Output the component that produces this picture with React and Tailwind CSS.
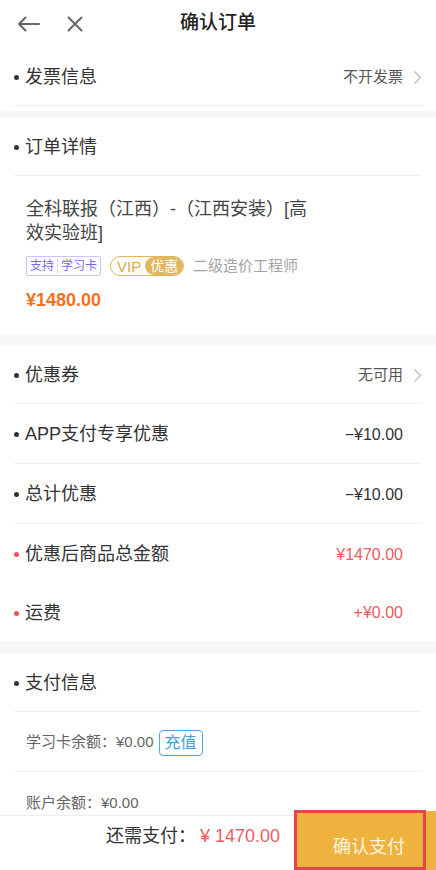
import React from "react";

const Chevron = () => (
  <svg width="9" height="15" viewBox="0 0 9 15" className="ml-[10px] shrink-0">
    <path d="M1.5 1.5 L7.5 7.5 L1.5 13.5" fill="none" stroke="#bdbdbd" strokeWidth="1.4" />
  </svg>
);

const Row = ({ label, value, chevron, red, valueClass, last, h }) => (
  <div
    className={`mx-[14px] pt-[3px] flex items-center ${h || "h-[60px]"} ${last ? "" : "border-b border-[#eeeeee]"}`}
  >
    <span className={`w-[5px] h-[5px] rounded-full shrink-0 ${red ? "bg-[#f0525a]" : "bg-[#333333]"}`} />
    <span className="ml-[6px] text-[18px] text-[#333333]">{label}</span>
    <span className={`ml-auto ${valueClass || "text-[15px] text-[#555555]"}`}>{value}</span>
    {chevron ? <Chevron /> : <span className="w-[19px] shrink-0" />}
  </div>
);

export default function App() {
  return (
    <div className="min-h-[870px] bg-[#f7f7f7] font-['Liberation_Sans','Noto_Sans_CJK_SC',sans-serif] pb-[60px]">
      {/* 头部 + 发票 */}
      <div className="bg-white pb-[5px]">
        <div className="h-[47px] flex items-center">
          <div className="w-[110px] flex items-center pl-[17px] gap-[27px]">
            <svg width="23" height="16" viewBox="0 0 23 16">
              <path d="M22 8 H2 M8.5 1.5 L2 8 L8.5 14.5" fill="none" stroke="#666666" strokeWidth="2" strokeLinecap="round" strokeLinejoin="round" />
            </svg>
            <svg width="16" height="16" viewBox="0 0 16 16">
              <path d="M1.5 1.5 L14.5 14.5 M14.5 1.5 L1.5 14.5" fill="none" stroke="#666666" strokeWidth="2" strokeLinecap="round" />
            </svg>
          </div>
          <div className="flex-1 text-center text-[19px] font-medium text-[#222222]">确认订单</div>
          <div className="w-[110px]" />
        </div>
        <Row label="发票信息" value="不开发票" chevron h="h-[59px]" />
      </div>

      {/* 订单详情 */}
      <div className="bg-white mt-[6px]">
        <Row label="订单详情" h="h-[59px]" />
        <div className="pl-[26px] pt-[21px] pb-[22px]">
          <div className="w-[295px] text-[18px] leading-[24px] text-[#444444]">
            全科联报（江西）-（江西安装）[高效实验班]
          </div>
          <div className="mt-[10px] flex items-center">
            <div className="h-[20px] flex items-center border border-[#cbc4f7] rounded-[2px] px-[3px] text-[12px] text-[#7468ee]">
              <span>支持</span>
              <span className="mx-[3px] h-[14px] border-l border-dashed border-[#cbc4f7]" />
              <span>学习卡</span>
            </div>
            <div className="ml-[9px] h-[20px] w-[74px] flex items-center border border-[#e3b65c] rounded-full overflow-hidden text-[15px]">
              <span className="pl-[6px] pr-[4px] text-[#dcaa4a] leading-none">VIP</span>
              <span className="flex-1 h-full flex items-center bg-[#e2b65e] text-white pl-[5px] rounded-l-full text-[14px]">优惠</span>
            </div>
            <span className="ml-[9px] text-[15px] text-[#a3a3a3]">二级造价工程师</span>
          </div>
          <div className="mt-[10px] text-[18px] leading-[24px] font-bold text-[#f5701e]">¥1480.00</div>
        </div>
      </div>

      {/* 优惠 */}
      <div className="bg-white mt-[12px]">
        <Row label="优惠券" value="无可用" chevron h="h-[58px]" />
        <Row label="APP支付专享优惠" value="−¥10.00" valueClass="text-[16px] text-[#333333]" />
        <Row label="总计优惠" value="−¥10.00" valueClass="text-[16px] text-[#333333]" />
        <Row label="优惠后商品总金额" value="¥1470.00" red last h="h-[59px]" valueClass="text-[16px] text-[#ee5a5f]" />
        <Row label="运费" value="+¥0.00" red last h="h-[58px]" valueClass="text-[16px] text-[#ee5a5f]" />
      </div>

      {/* 支付信息 */}
      <div className="bg-white mt-[12px]">
        <Row label="支付信息" h="h-[59px]" />
        <div className="mx-[14px] pt-[3px] h-[60px] flex items-center border-b border-[#eeeeee] pl-[12px]">
          <span className="text-[15px] text-[#666666]">学习卡余额：¥0.00</span>
          <span className="ml-[5px] h-[26px] px-[5px] flex items-center border border-[#4ea5e3] rounded-[4px] text-[16px] text-[#3f9ee0]">
            充值
          </span>
        </div>
        <div className="mx-[14px] pt-[3px] h-[60px] flex items-center pl-[12px]">
          <span className="text-[15px] text-[#666666]">账户余额：¥0.00</span>
        </div>
      </div>

      {/* 底部栏 */}
      <div className="fixed left-0 right-0 bottom-0 h-[55px] bg-white border-t border-[#eeeeee] flex justify-end items-start">
        <div className="pt-[8px] flex items-center text-[18px] leading-[24px]">
          <span className="text-[#333333]">还需支付：</span>
          <span className="ml-[4px] text-[#ee5a5f]">¥ 1470.00</span>
        </div>
        <div className="relative ml-[15px] w-[141px] h-[59px] -mt-[5px] bg-[#efb23e] text-[18px] text-[#fff6e0] pt-[23px] pl-[38px]">
          确认支付
          <div className="absolute left-[-1px] top-[-1px] w-[132px] h-[60px] border-[3px] border-[#e8434b]" />
        </div>
      </div>
    </div>
  );
}
